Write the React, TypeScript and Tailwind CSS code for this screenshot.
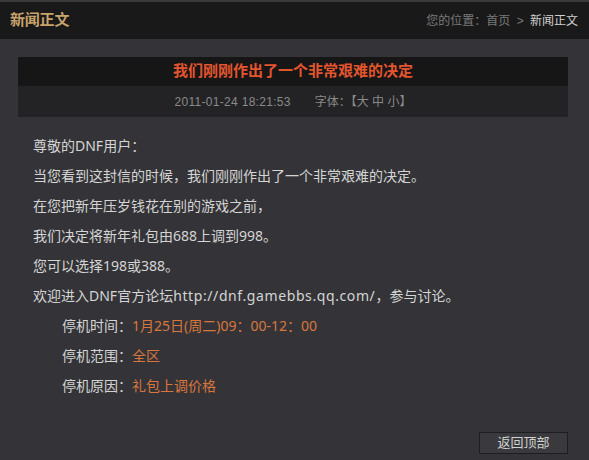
import React from 'react';

const font = { fontFamily: '"Liberation Sans", "Noto Sans CJK SC", sans-serif' };
const bodyFont = { fontFamily: '"Noto Sans", "Noto Sans CJK SC", sans-serif' };

export default function App() {
  const lines = [
    '尊敬的DNF用户：',
    '当您看到这封信的时候，我们刚刚作出了一个非常艰难的决定。',
    '在您把新年压岁钱花在别的游戏之前，',
    '我们决定将新年礼包由688上调到998。',
    '您可以选择198或388。',
  ];
  const details = [
    { label: '停机时间：', value: '1月25日(周二)09：00-12：00' },
    { label: '停机范围：', value: '全区' },
    { label: '停机原因：', value: '礼包上调价格' },
  ];

  return (
    <div className="w-[589px] h-[460px] bg-[#343438] overflow-hidden" style={font}>
      <header className="h-[39px] bg-[#191919] border-t-2 border-[#3a3a3a] flex items-center justify-between pl-[10px] pr-[11px]">
        <h1 className="text-[15px] font-bold text-[#c9a36c] tracking-[-0.2px]">新闻正文</h1>
        <div className="text-[12px] text-[#7a7a7a]">
          您的位置：首页 <span className="mx-[3px]">&gt;</span> <span className="text-[#d0d0d0]">新闻正文</span>
        </div>
      </header>

      <main className="pt-[18px] pl-[18px] pr-[21px]">
        <div className="h-[29px] bg-[#161616] flex items-center justify-center">
          <h2 className="text-[15px] font-bold text-[#e3552f]">我们刚刚作出了一个非常艰难的决定</h2>
        </div>
        <div className="h-[31px] bg-[#232325] flex items-center justify-center gap-[24px] text-[12px] text-[#8a8a8a]">
          <span className="tracking-[0.3px]">2011-01-24 18:21:53</span>
          <span>字体：【大 中 小】</span>
        </div>

        <div className="mt-[14px] pl-[15px] text-[14px] leading-[30px] text-[#d4d4d4]" style={bodyFont}>
          {lines.map((l) => (
            <p key={l}>{l}</p>
          ))}
          <p>
            欢迎进入DNF官方论坛<span className="tracking-[0.6px]">http://dnf.gamebbs.qq.com/</span>，参与讨论。
          </p>
          {details.map((d) => (
            <p key={d.label} className="pl-[29px]">
              {d.label}
              <span className="text-[#d9763d]">{d.value}</span>
            </p>
          ))}
        </div>

        <div className="mt-[31px] flex justify-end">
          <button className="w-[89px] h-[22px] border border-[#1e1e20] bg-[#3a3a3e] text-[13px] text-[#d0d0d0] flex items-center justify-center">
            返回顶部
          </button>
        </div>
      </main>
    </div>
  );
}
